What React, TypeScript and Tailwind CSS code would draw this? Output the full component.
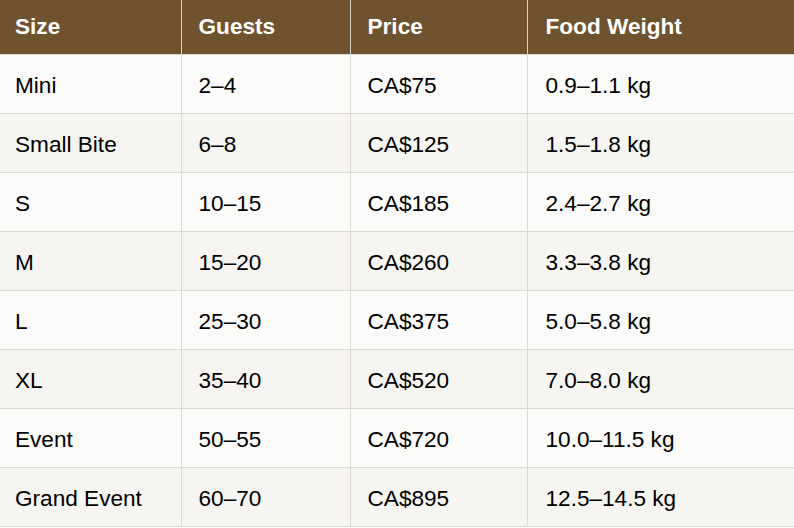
import React from "react";

const rows = [
  ["Mini", "2–4", "CA$75", "0.9–1.1 kg"],
  ["Small Bite", "6–8", "CA$125", "1.5–1.8 kg"],
  ["S", "10–15", "CA$185", "2.4–2.7 kg"],
  ["M", "15–20", "CA$260", "3.3–3.8 kg"],
  ["L", "25–30", "CA$375", "5.0–5.8 kg"],
  ["XL", "35–40", "CA$520", "7.0–8.0 kg"],
  ["Event", "50–55", "CA$720", "10.0–11.5 kg"],
  ["Grand Event", "60–70", "CA$895", "12.5–14.5 kg"],
];

const widths = ["w-[181px]", "w-[169px]", "w-[177px]", "w-[267px]"];
const pads = ["pl-[15px]", "pl-[17px]", "pl-[17px]", "pl-[18px]"];

export default function App() {
  return (
    <div className="w-[794px] h-[528px] bg-white overflow-hidden" style={{ fontFamily: '"Liberation Sans", Arial, sans-serif' }}>
      <table className="border-collapse table-fixed w-[794px] text-[22.6px] text-black">
        <thead>
          <tr className="bg-[#6f5230] h-[54px]">
            {["Size", "Guests", "Price", "Food Weight"].map((h, i) => (
              <th
                key={h}
                className={`${widths[i]} ${pads[i]} text-left font-bold text-white pr-2 pt-[1px] border-b border-[#dcd9d3] ${i < 3 ? "border-r border-r-[#d6d2ca]" : ""}`}
              >
                {h}
              </th>
            ))}
          </tr>
        </thead>
        <tbody>
          {rows.map((r, ri) => (
            <tr key={ri} className={`h-[59px] ${ri % 2 === 0 ? "bg-[#fbfbfa]" : "bg-[#f6f5f2]"}`}>
              {r.map((c, i) => (
                <td
                  key={i}
                  className={`${pads[i]} pr-2 pt-[5px] border-b border-[#dcd9d3] ${i < 3 ? "border-r" : ""}`}
                >
                  {c}
                </td>
              ))}
            </tr>
          ))}
        </tbody>
      </table>
    </div>
  );
}
